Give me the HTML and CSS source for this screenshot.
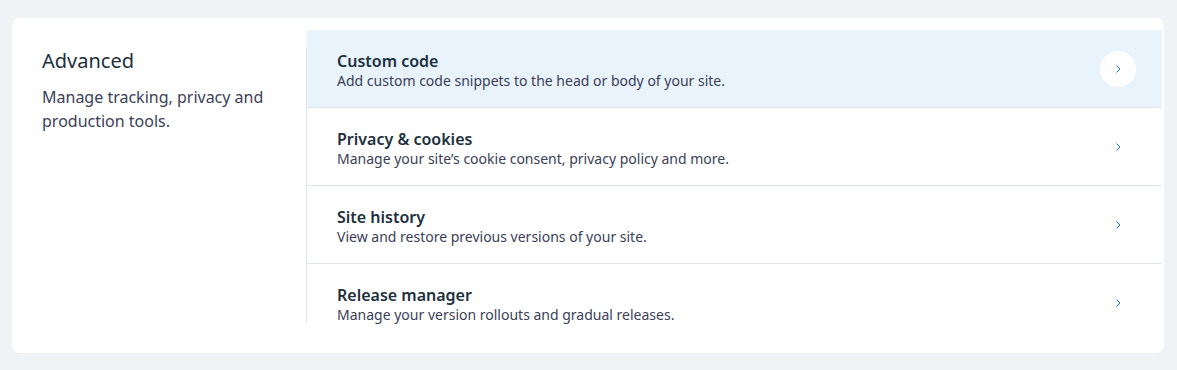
FILE: index.html
```html
<!DOCTYPE html>
<html>
<head>
<meta charset="utf-8">
<link rel="stylesheet" href="styles.css">
</head>
<body>
<div class="card">
  <div class="intro">
    <h2 class="intro-title">Advanced</h2>
    <p class="intro-text">Manage tracking, privacy and production tools.</p>
  </div>
  <div class="list">
    <div class="row row-active">
      <div class="row-text">
        <div class="row-title">Custom code</div>
        <div class="row-sub">Add custom code snippets to the head or body of your site.</div>
      </div>
      <div class="chev chev-circle"><svg width="8" height="10" viewBox="0 0 8 10"><path d="M2.5 1.5 L6 5 L2.5 8.5" fill="none" stroke="#116dff" stroke-width="1"/></svg></div>
    </div>
    <div class="row">
      <div class="row-text">
        <div class="row-title">Privacy &amp; cookies</div>
        <div class="row-sub">Manage your site’s cookie consent, privacy policy and more.</div>
      </div>
      <div class="chev"><svg width="8" height="10" viewBox="0 0 8 10"><path d="M2.5 1.5 L6 5 L2.5 8.5" fill="none" stroke="#116dff" stroke-width="1"/></svg></div>
    </div>
    <div class="row">
      <div class="row-text">
        <div class="row-title">Site history</div>
        <div class="row-sub">View and restore previous versions of your site.</div>
      </div>
      <div class="chev"><svg width="8" height="10" viewBox="0 0 8 10"><path d="M2.5 1.5 L6 5 L2.5 8.5" fill="none" stroke="#116dff" stroke-width="1"/></svg></div>
    </div>
    <div class="row row-last">
      <div class="row-text">
        <div class="row-title">Release manager</div>
        <div class="row-sub">Manage your version rollouts and gradual releases.</div>
      </div>
      <div class="chev"><svg width="8" height="10" viewBox="0 0 8 10"><path d="M2.5 1.5 L6 5 L2.5 8.5" fill="none" stroke="#116dff" stroke-width="1"/></svg></div>
    </div>
  </div>
</div>
</body>
</html>
```
FILE: styles.css
```css
html, body {
  margin: 0;
  padding: 0;
  background: #eff3f6;
  font-family: "Noto Sans", "DejaVu Sans", sans-serif;
}
body {
  padding: 18px 13px 17px 12px;
}
.card {
  background: #ffffff;
  border-radius: 8px;
  display: flex;
  padding: 12px 2px 12px 0;
  height: 311px;
}
.intro {
  width: 264px;
  padding: 0 0 0 30px;
  border-right: 1px solid #dfe5eb;
  margin: 18px 0 18px 0;
}
.intro-title {
  margin: 1px 0 0 0;
  font-size: 20px;
  font-weight: 400;
  line-height: 24px;
  color: #20303c;
}
.intro-text {
  margin: 12px 0 0 0;
  font-size: 16px;
  line-height: 24px;
  color: #3b4057;
  width: 240px;
}
.list {
  flex: 1;
  display: flex;
  flex-direction: column;
}
.row {
  height: 77px;
  border-bottom: 1px solid #dfe5eb;
  display: flex;
  align-items: center;
  padding: 0 26px 0 30px;
}
.row-last {
  border-bottom: none;
}
.row-active {
  background: #e8f3fc;
}
.row-text {
  flex: 1;
  padding-top: 4px;
}
.row-title {
  font-size: 16px;
  font-weight: 600;
  line-height: 20px;
  color: #20303c;
}
.row-sub {
  font-size: 14px;
  line-height: 20px;
  color: #3b4057;
}
.chev {
  width: 36px;
  height: 36px;
  border-radius: 50%;
  display: flex;
  align-items: center;
  justify-content: center;
}
.chev-circle {
  background: #ffffff;
}
.chev svg {
  display: block;
}
```
